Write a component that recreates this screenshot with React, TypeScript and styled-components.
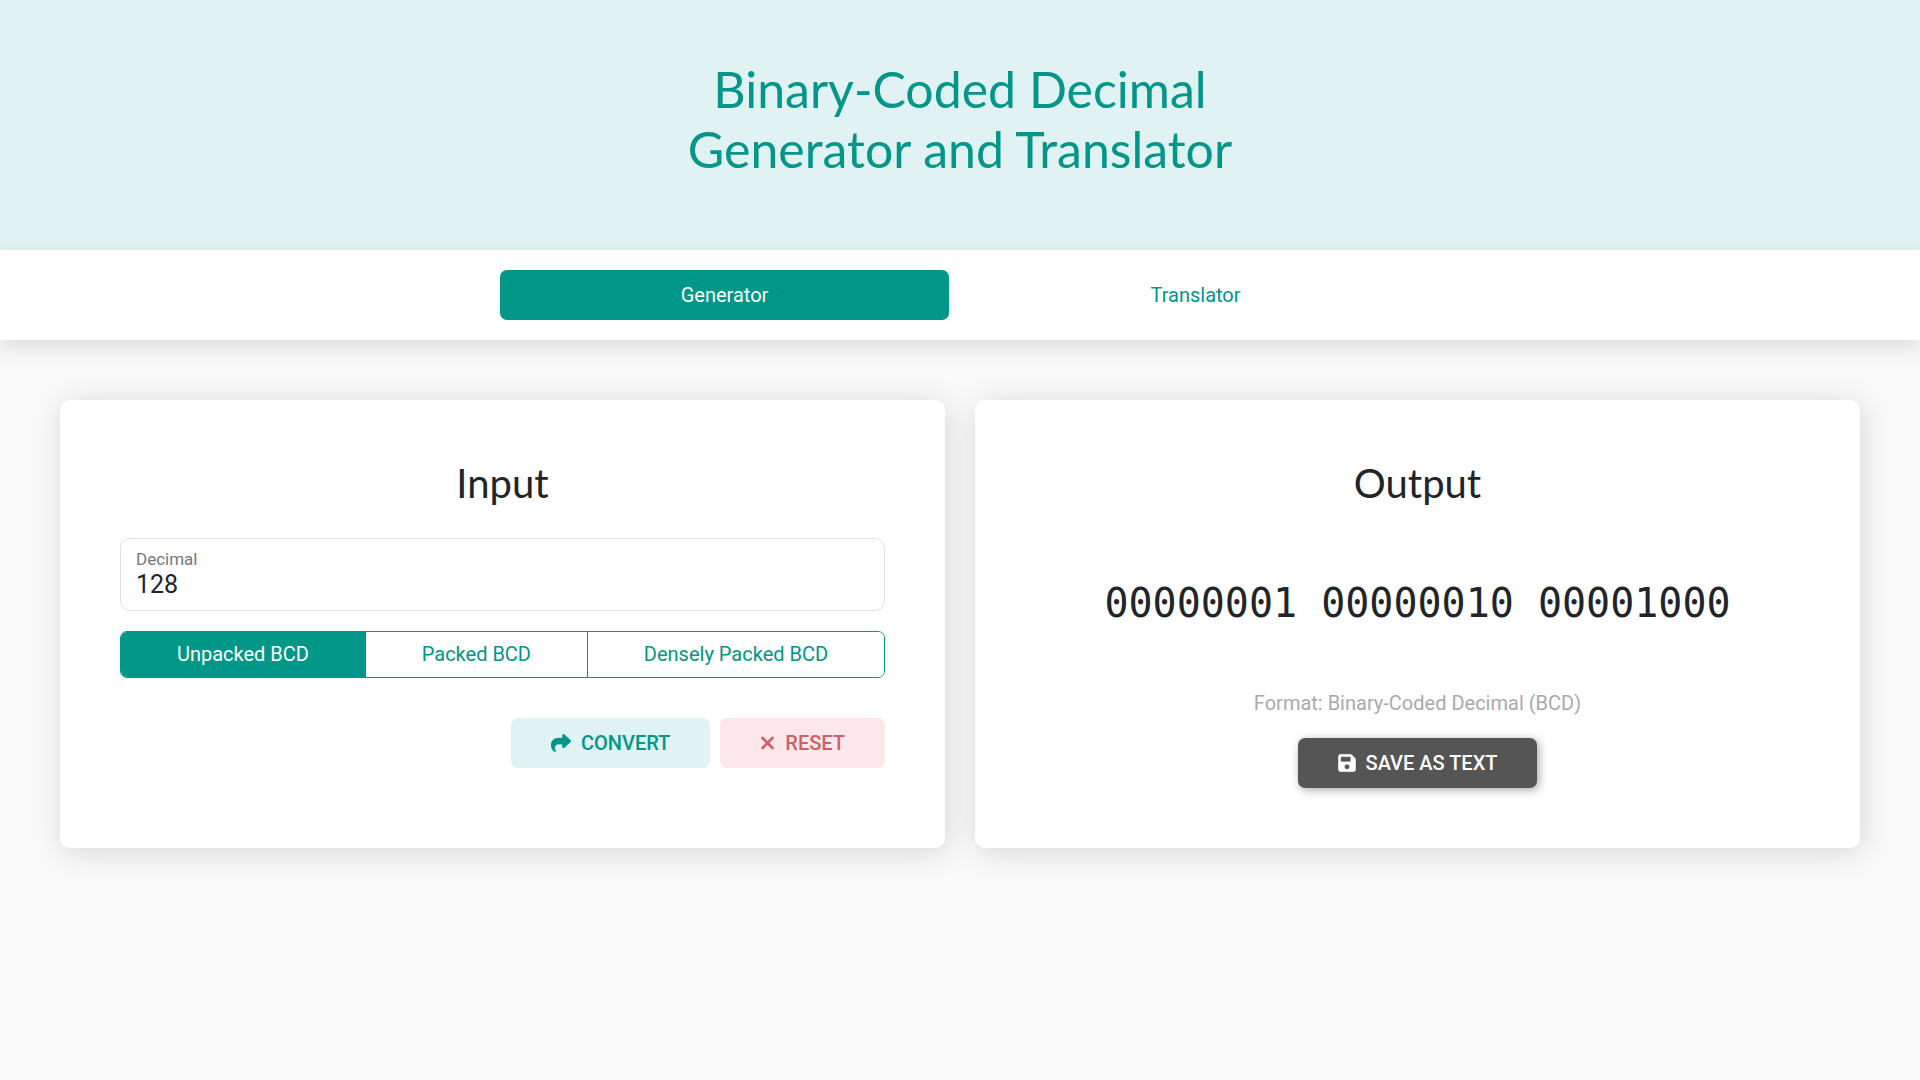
import React, { useState } from "react";
import styled, { createGlobalStyle } from "styled-components";
import { FaShare, FaXmark, FaFloppyDisk } from "react-icons/fa6";

const GlobalStyle = createGlobalStyle`
  *, *::before, *::after { box-sizing: border-box; }
  body {
    margin: 0;
    background: #fafafa;
    color: #212529;
    font: 400 20px/30px Roboto, "Noto Sans", sans-serif;
  }
  button, input { font: inherit; color: inherit; }
`;

const Header = styled.header`
  padding: 59px 20px 71px;
  background: #e0f2f1;
  color: #009688;
  text-align: center;
`;

const Title = styled.h1`
  margin: 0;
  font: 400 50px/60px Lato, "Open Sans", sans-serif;
`;

const TabBar = styled.nav`
  padding: 20px;
  background: #fff;
  box-shadow: 0 8px 20px rgba(0, 0, 0, 0.12);
`;

const Tabs = styled.div`
  display: grid;
  grid-template-columns: 1fr 1fr;
  gap: 22px;
  max-width: 920px;
  margin: 0 auto;
`;

const Tab = styled.button<{ $active: boolean }>`
  padding: 10px 20px;
  border: 0;
  border-radius: 7px;
  background: ${(p) => (p.$active ? "#009688" : "transparent")};
  color: ${(p) => (p.$active ? "#fff" : "#009688")};
  cursor: pointer;
`;

const Main = styled.main`
  display: grid;
  grid-template-columns: 1fr 1fr;
  gap: 30px;
  padding: 60px;
`;

const Card = styled.section`
  padding: 59px 60px 60px;
  border-radius: 10px;
  background: #fff;
  box-shadow: 2px 4px 30px rgba(0, 0, 0, 0.15);
`;

const CardTitle = styled.h2`
  margin: 0 0 31px;
  font: 400 40px/48px Lato, "Open Sans", sans-serif;
  text-align: center;
`;

const Field = styled.label`
  display: flex;
  flex-direction: column;
  padding: 9px 15px 11px;
  border: 1px solid #dee2e6;
  border-radius: 10px;
`;

const FieldLabel = styled.span`
  color: #777;
  font-size: 17px;
  line-height: 23px;
`;

const FieldInput = styled.input`
  width: 100%;
  height: 28px;
  padding: 0;
  border: 0;
  outline: 0;
  background: transparent;
  font-size: 25px;
  line-height: 28px;
`;

const Formats = styled.div`
  display: flex;
  margin-top: 20px;
  border: 1px solid #009688;
  border-radius: 7px;
  overflow: hidden;
`;

const FormatButton = styled.button<{ $active: boolean }>`
  flex: 1 1 auto;
  padding: 7px 15px 8px;
  border: 0;
  background: ${(p) => (p.$active ? "#009688" : "#fff")};
  color: ${(p) => (p.$active ? "#fff" : "#009688")};
  cursor: pointer;

  & + & { border-left: 1px solid #009688; }
`;

const Actions = styled.div`
  display: flex;
  justify-content: flex-end;
  gap: 10px;
  margin-top: 40px;
`;

const tones = {
  primary: { background: "#e0f2f1", color: "#009688", shadow: "none", icon: "20px" },
  danger: { background: "#fce8ea", color: "#cd6066", shadow: "none", icon: "15px" },
  dark: {
    background: "#555",
    color: "#fff",
    shadow: "2px 2px 10px rgba(0, 0, 0, 0.35)",
    icon: "18px",
  },
};

const ActionButton = styled.button<{ $tone: keyof typeof tones }>`
  display: inline-flex;
  align-items: center;
  gap: 10px;
  padding: 10px 40px;
  border: 0;
  border-radius: 7px;
  background: ${(p) => tones[p.$tone].background};
  color: ${(p) => tones[p.$tone].color};
  box-shadow: ${(p) => tones[p.$tone].shadow};
  font-weight: 500;
  text-transform: uppercase;
  cursor: pointer;

  svg {
    flex: none;
    width: ${(p) => tones[p.$tone].icon};
    height: 20px;
    stroke-width: 6;
  }
`;

const Result = styled.output`
  display: block;
  padding: 35px 0 55px;
  font: 400 40px/60px "DejaVu Sans Mono", monospace;
  text-align: center;
`;

const FormatNote = styled.p`
  margin: 0 0 20px;
  color: #aaa;
  text-align: center;
`;

const SaveRow = styled.div`
  display: flex;
  justify-content: center;
`;

const pages = ["Generator", "Translator"];
const formats = ["Unpacked BCD", "Packed BCD", "Densely Packed BCD"];

export default function App() {
  const [page, setPage] = useState(pages[0]);
  const [format, setFormat] = useState(formats[0]);
  const [value, setValue] = useState("128");

  return (
    <>
      <GlobalStyle />
      <Header>
        <Title>
          Binary-Coded Decimal
          <br />
          Generator and Translator
        </Title>
      </Header>
      <TabBar>
        <Tabs>
          {pages.map((name) => (
            <Tab key={name} type="button" $active={name === page} onClick={() => setPage(name)}>
              {name}
            </Tab>
          ))}
        </Tabs>
      </TabBar>
      <Main>
        <Card>
          <CardTitle>Input</CardTitle>
          <Field htmlFor="decimal">
            <FieldLabel>Decimal</FieldLabel>
            <FieldInput id="decimal" value={value} onChange={(e) => setValue(e.target.value)} />
          </Field>
          <Formats>
            {formats.map((name) => (
              <FormatButton
                key={name}
                type="button"
                $active={name === format}
                onClick={() => setFormat(name)}
              >
                {name}
              </FormatButton>
            ))}
          </Formats>
          <Actions>
            <ActionButton type="button" $tone="primary">
              <FaShare />
              Convert
            </ActionButton>
            <ActionButton type="button" $tone="danger" onClick={() => setValue("")}>
              <FaXmark />
              Reset
            </ActionButton>
          </Actions>
        </Card>
        <Card>
          <CardTitle>Output</CardTitle>
          <Result htmlFor="decimal">00000001 00000010 00001000</Result>
          <FormatNote>Format: Binary-Coded Decimal (BCD)</FormatNote>
          <SaveRow>
            <ActionButton type="button" $tone="dark">
              <FaFloppyDisk />
              Save as text
            </ActionButton>
          </SaveRow>
        </Card>
      </Main>
    </>
  );
}
